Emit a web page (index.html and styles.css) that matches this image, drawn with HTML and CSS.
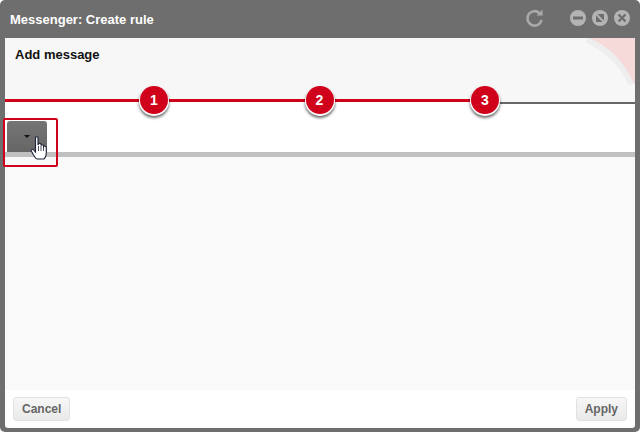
FILE: index.html
```html
<!DOCTYPE html>
<html>
<head>
    <title>Messenger: Create rule</title>
    <link rel="stylesheet" href="styles.css">
</head>
<body>
    <div class="window">
        <div class="titlebar">
            <span class="title">Messenger: Create rule</span>
            <svg class="refresh" width="20" height="20" viewBox="0 0 20 20">
                <path d="M14.6 5.2A7.2 7.2 0 1 0 16.6 12" fill="none" stroke="#a9a9a9" stroke-width="2.6"/>
                <path d="M11.5 7.6L17.6 7.6L17.6 1.6Z" fill="#a9a9a9"/>
            </svg>
            <div class="win-btns">
                <svg width="16" height="16" viewBox="0 0 16 16">
                    <circle cx="8" cy="8" r="8" fill="#b4b4b4"/>
                    <rect x="3" y="6.500" width="10" height="3" fill="#6e6e6e"/>
                </svg>
                <svg width="16" height="16" viewBox="0 0 16 16">
                    <circle cx="8" cy="8" r="8" fill="#b4b4b4"/>
                    <rect x="4" y="4" width="8" height="8" fill="#6e6e6e"/>
                    <path d="M3 3L13 13" stroke="#b4b4b4" stroke-width="2"/>
                </svg>
                <svg width="16" height="16" viewBox="0 0 16 16">
                    <circle cx="8" cy="8" r="8" fill="#b4b4b4"/>
                    <path d="M4.500 4.500L11.500 11.500M11.500 4.500L4.500 11.500" stroke="#6e6e6e" stroke-width="2.400"/>
                </svg>
            </div>
        </div>

        <div class="wizard-head">
            <svg class="corner" width="50" height="48" viewBox="0 0 50 48">
                <path d="M2 0C22 10 38 24 48 46" fill="none" stroke="#000" stroke-opacity=".035" stroke-width="9"/>
                <path d="M4 0C24 8 40 24 49 46H50V0Z" fill="#f6d9d9"/>
            </svg>
            <h3>Add message</h3>
            <div class="steps">
                <span class="step">1</span>
                <span class="step">2</span>
                <span class="step">3</span>
            </div>
        </div>

        <div class="toolbar">
            <div class="drop-btn"><span class="caret"></span></div>
        </div>
        <div class="divider"></div>
        <div class="content"></div>

        <div class="footer">
            <button class="btn">Cancel</button>
            <button class="btn">Apply</button>
        </div>

        <div class="highlight"></div>
        <svg class="hand" width="18" height="24" viewBox="0 0 17 24">
            <path d="M5 1.500C5 .4 7.500 .4 7.500 1.500V9L8 8C8.500 7 10.500 7 10.500 8.500V9.500C11 8.500 13 8.500 13 10V10.500C13.500 9.800 15.800 10 15.800 11.500V17C15.800 20 14 23 13 23H6.500C5 23 4.500 21 3 19L.8 15C.2 13.500 2 12.500 3.200 14L5 16Z" fill="#fff" stroke="#1a2238" stroke-width="1.100"/>
            <path d="M8 10V15M10.500 10V15M13 11V15" stroke="#1a2238" stroke-width=".8" fill="none"/>
        </svg>
    </div>
</body>
</html>
```

FILE: styles.css
```css
html, body {
    margin: 0;
    padding: 0;
    background: #fff;
}
body {
    font-family: "Liberation Sans", Arial, sans-serif;
    font-size: 12px;
}
.window {
    position: relative;
    display: flex;
    flex-direction: column;
    width: 630px;
    height: 428px;
    padding: 0 5px 4px 5px;
    background: #6e6e6e;
    border-radius: 5px;
}
.titlebar {
    display: flex;
    align-items: center;
    height: 38px;
    flex-shrink: 0;
    padding-left: 5px;
}
.title {
    flex: 1;
    color: #fff;
    font-size: 13px;
    font-weight: bold;
}
.refresh {
    margin-right: 25px;
    margin-top: -2px;
}
.win-btns {
    display: flex;
    gap: 6px;
    margin-right: 5px;
    margin-top: -2px;
}
.wizard-head {
    position: relative;
    height: 67px;
    flex-shrink: 0;
    background: linear-gradient(#f7f7f7 64px, #fff 64px);
}
.wizard-head h3 {
    margin: 0;
    padding: 9px 0 0 10px;
    font-size: 13px;
    line-height: 15px;
    color: #111;
}
.corner {
    position: absolute;
    top: 0;
    right: 0;
}
.steps {
    position: absolute;
    left: 0;
    right: 0;
    top: 61px;
    height: 5px;
    display: flex;
    align-items: flex-start;
    padding-left: 135px;
    gap: 137.500px;
    background:
        linear-gradient(#d0021b, #d0021b) 0 0 / 480px 3px no-repeat,
        linear-gradient(transparent 3px, #666 3px, #666 5px) 100% 0 / 150px 5px no-repeat;
}
.step {
    width: 28px;
    height: 28px;
    margin-top: -13px;
    flex-shrink: 0;
    border-radius: 50%;
    background: #d0021b;
    color: #fff;
    font-size: 14px;
    font-weight: bold;
    line-height: 28px;
    text-align: center;
    box-shadow: 0 1px 0 1px #fff, 0 3px 3px 1px rgba(0, 0, 0, .6);
}
.toolbar {
    height: 47px;
    flex-shrink: 0;
    background: #fff;
    padding: 16px 0 0 2px;
    box-sizing: border-box;
}
.drop-btn {
    position: relative;
    z-index: 1;
    display: flex;
    align-items: center;
    justify-content: center;
    width: 40px;
    height: 31px;
    background: linear-gradient(#757575, #666);
    border-radius: 3px 3px 0 0;
}
.caret {
    width: 0;
    height: 0;
    border: 3px solid transparent;
    border-top: 3px solid #111;
    border-bottom: 0;
}
.divider {
    height: 5px;
    flex-shrink: 0;
    background: #c0c0c0;
}
.content {
    flex: 1;
    background: #f9f9f9;
}
.footer {
    display: flex;
    justify-content: space-between;
    align-items: center;
    height: 38px;
    flex-shrink: 0;
    padding: 0 8px;
    box-sizing: border-box;
    background: #fff;
    border-radius: 0 0 3px 3px;
}
.btn {
    height: 24px;
    padding: 0 8px;
    border: 1px solid #e2e2e2;
    border-radius: 3px;
    background: linear-gradient(#f7f7f7, #e9e9e9);
    color: #666;
    font-family: inherit;
    font-size: 12px;
    font-weight: bold;
}
.highlight {
    position: absolute;
    z-index: 2;
    left: 3px;
    top: 118px;
    width: 51px;
    height: 45px;
    border: 2px solid #d0021b;
    border-radius: 2px;
}
.hand {
    position: absolute;
    z-index: 3;
    left: 30px;
    top: 136px;
}
```
